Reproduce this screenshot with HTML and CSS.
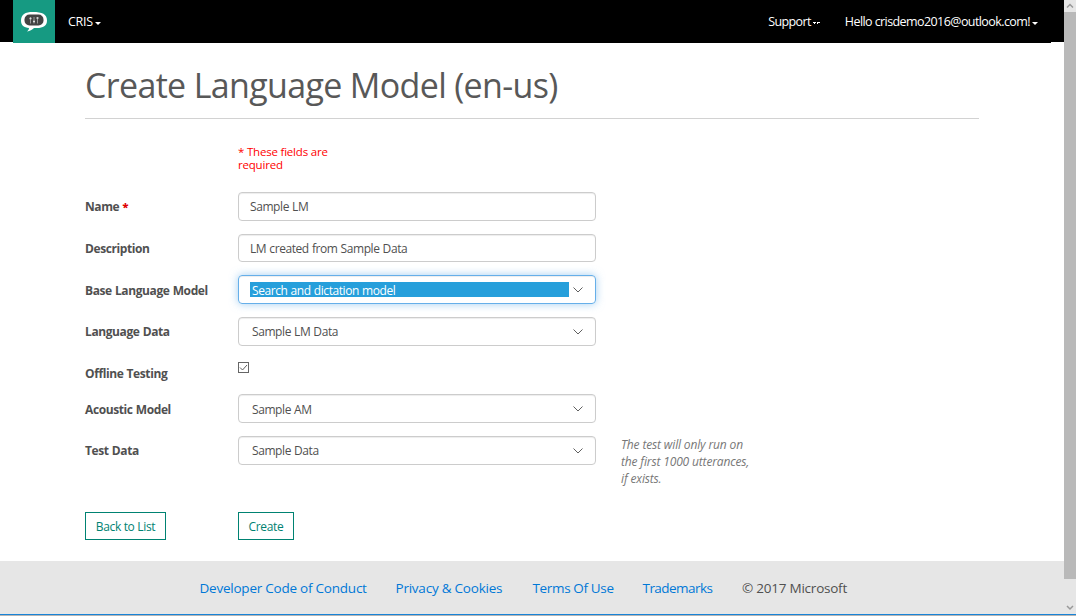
FILE: index.html
```html
<!DOCTYPE html>
<html lang="en">
<head>
<meta charset="utf-8">
<title>Create Language Model</title>
<link rel="stylesheet" href="styles.css">
</head>
<body>
<div class="window">
  <div class="page">
    <header class="topbar">
      <nav class="nav">
        <a class="logo"><svg width="42" height="43" viewBox="0 0 42 43"><path d="M20 12c9 0 14 2 14 8.500c0 5.500-4 7.500-10 7.500h-3c-2 2-4 3-7 3.500c1-1 2-2 2-3.500c-5-.5-8-2.500-8-7.500c0-6 4-8.500 12-8.500z" fill="#fff"/><rect x="11.500" y="14.500" width="19" height="11" rx="5" fill="#434343"/><path d="M17.500 17v6.500M21 17v6.500M24.500 17v6.500" stroke="#999" stroke-width="1"/><path d="M16.500 18.500h2M20 21.500h2M23.500 18h2" stroke="#ddd" stroke-width="1.500"/></svg></a>
        <a class="nav-item cris">CRIS<i class="caret"></i></a>
        <a class="nav-item support">Support<svg class="carets" width="7" height="3" viewBox="0 0 7 3"><path d="M0 0h3v1H2v1H1V1H0zM4 0h3v1H5v1H4z" fill="#fff"/></svg></a>
        <a class="nav-item hello">Hello crisdemo2016@outlook.com!<i class="caret"></i></a>
      </nav>
    </header>
    <main class="content">
      <h1>Create Language Model (en-us)</h1>
      <p class="required">* These fields are<br>required</p>
      <form class="form">
        <div class="row"><label>Name <b class="star">*</b></label><div class="field">Sample LM</div></div>
        <div class="row second"><label>Description</label><div class="field low">LM created from Sample Data</div></div>
        <div class="row"><label class="low">Base Language Model</label><div class="field select focus"><span class="value">Search and dictation model</span><svg class="chev" width="10" height="6" viewBox="0 0 10 6"><path d="M.5.5L5 5L9.500.5"/></svg></div></div>
        <div class="row"><label>Language Data</label><div class="field select"><span class="value">Sample LM Data</span><svg class="chev" width="10" height="6" viewBox="0 0 10 6"><path d="M.5.5L5 5L9.500.5"/></svg></div></div>
        <div class="row check"><label>Offline Testing</label><span class="box"><svg width="9" height="9" viewBox="0 0 9 9"><path d="M1 4.500L3.500 7L8 2"/></svg></span></div>
        <div class="row"><label class="low">Acoustic Model</label><div class="field select"><span class="value under">Sample AM</span><svg class="chev" width="10" height="6" viewBox="0 0 10 6"><path d="M.5.5L5 5L9.500.5"/></svg></div></div>
        <div class="row last"><label>Test Data</label><div class="field select"><span class="value">Sample Data</span><svg class="chev" width="10" height="6" viewBox="0 0 10 6"><path d="M.5.5L5 5L9.500.5"/></svg></div><p class="hint">The test will only run on<br>the first 1000 utterances,<br>if exists.</p></div>
        <div class="actions"><a class="btn back">Back to List</a><a class="btn create">Create</a></div>
      </form>
    </main>
    <footer class="footer">
      <a class="f1">Developer Code of Conduct</a><a class="f2">Privacy &amp; Cookies</a><a class="f3">Terms Of Use</a><a class="f4">Trademarks</a><span class="f5">© 2017 Microsoft</span>
    </footer>
  </div>
  <div class="scrollbar">
    <svg width="12" height="12" viewBox="0 0 12 12"><path d="M3 7.500L6 4.500L9 7.500" /></svg>
    <div class="thumb"></div>
    <svg class="down" width="12" height="12" viewBox="0 0 12 12"><path d="M3 4L6 7L9 4" /></svg>
  </div>
</div>
<div class="edge"></div>
</body>
</html>
```
FILE: styles.css
```css
* { box-sizing: border-box; }
body { margin: 0; width: 1076px; height: 616px; overflow: hidden; background: #fff; color: #505050; font: 12px/16px "Open Sans", "Noto Sans", sans-serif; white-space: nowrap; }
.window { display: flex; height: 614px; }
.page { width: 1064px; display: flex; flex-direction: column; }
.topbar { height: 42px; background: #000; padding: 0 13px; }
.nav { display: flex; height: 43px; background: #000; color: #fff; align-items: center; }
.logo { width: 42px; height: 43px; background: #169a82; }
.logo svg { display: block; }
.nav-item { display: flex; align-items: center; line-height: 20px; font-size: 12.5px; letter-spacing: -.58px; }
.cris { margin-left: 13px; letter-spacing: -.3px; }
.support { margin-left: auto; letter-spacing: -.6px; }
.hello { margin-left: 25px; margin-right: 13px; }
.caret { border: 3px solid transparent; border-top-color: #fff; border-bottom: 0; margin: 3px 0 0 2px; }
.carets { margin: 3px 0 0 2px; }
.content { padding: 0 85px; height: 519px; }
h1 { margin: 0; width: 894px; height: 77px; border-bottom: 1px solid #d2d2d2; color: #585858; font-size: 34px; line-height: 46px; font-weight: 400; letter-spacing: -.66px; padding-top: 20px; }
.required { margin: 26px 0 0 153px; font-size: 11.5px; letter-spacing: -.2px; line-height: 13px; height: 47px; color: #f00; }
.row { display: flex; height: 29px; margin-bottom: 13px; align-items: center; }
.row.second { height: 28px; }
.row label { width: 153px; font-weight: 700; letter-spacing: -.4px; word-spacing: .5px; padding-top: 1px; }
.row label.low { padding-top: 3px; }
.star { color: #e00000; font-size: 11px; }
.field { width: 358px; height: 100%; border: 1px solid #ccc; border-radius: 4px; padding: 0 11px; display: flex; align-items: center; box-shadow: inset 0 1px 1px rgba(0,0,0,.075); letter-spacing: -.42px; word-spacing: .4px; }
.field.low { padding-top: 2px; }
.focus { border-color: #66afe9; box-shadow: inset 0 1px 1px rgba(0,0,0,.075), 0 0 8px rgba(102,175,233,.6); }
.value { width: 319px; padding-left: 2px; line-height: 15px; height: 15px; }
.value.under { line-height: 17px; }
.focus .value { background: #269fdb; color: #fff; line-height: 17px; }
.chev { margin-left: 3.500px; }
.chev path, .box path { fill: none; stroke: #606060; stroke-width: 1; }
.check { height: 22px; align-items: flex-start; }
.check label { padding-top: 7px; }
.box { width: 11px; height: 11px; margin-top: 3px; border: 1px solid #666; }
.box svg { display: block; }
.last { align-items: flex-start; margin-bottom: 47px; }
.last label { padding-top: 7px; }
.hint { margin: 0 0 0 25px; letter-spacing: -.15px; line-height: 17px; font-style: italic; color: #777; }
.actions { display: flex; }
.btn { height: 28px; line-height: 27px; border: 1px solid #008272; color: #008272; text-align: center; letter-spacing: -.34px; }
.back { width: 81px; margin-right: 72px; }
.create { width: 56px; }
.footer { height: 53px; background: #e6e6e6; display: flex; line-height: 54px; padding-left: 199.500px; font-size: 13.5px; letter-spacing: -.23px; }
.footer a { color: #0078d7; }
.footer .f1 { width: 196px; } .footer .f2 { width: 137px; } .footer .f3 { width: 110px; letter-spacing: -.35px; } .footer .f4 { width: 99.500px; letter-spacing: -.55px; }
.scrollbar { width: 12px; background: #e6e6e6; display: flex; flex-direction: column; }
.scrollbar svg { display: block; }
.scrollbar path { fill: none; stroke: #999; stroke-width: 1.5; }
.thumb { height: 567px; background: #b9b9b9; }
.down { margin-top: 23px; }
.edge { height: 2px; background: #b5b5b5; border-top: 1px solid #1883d7; }
```
